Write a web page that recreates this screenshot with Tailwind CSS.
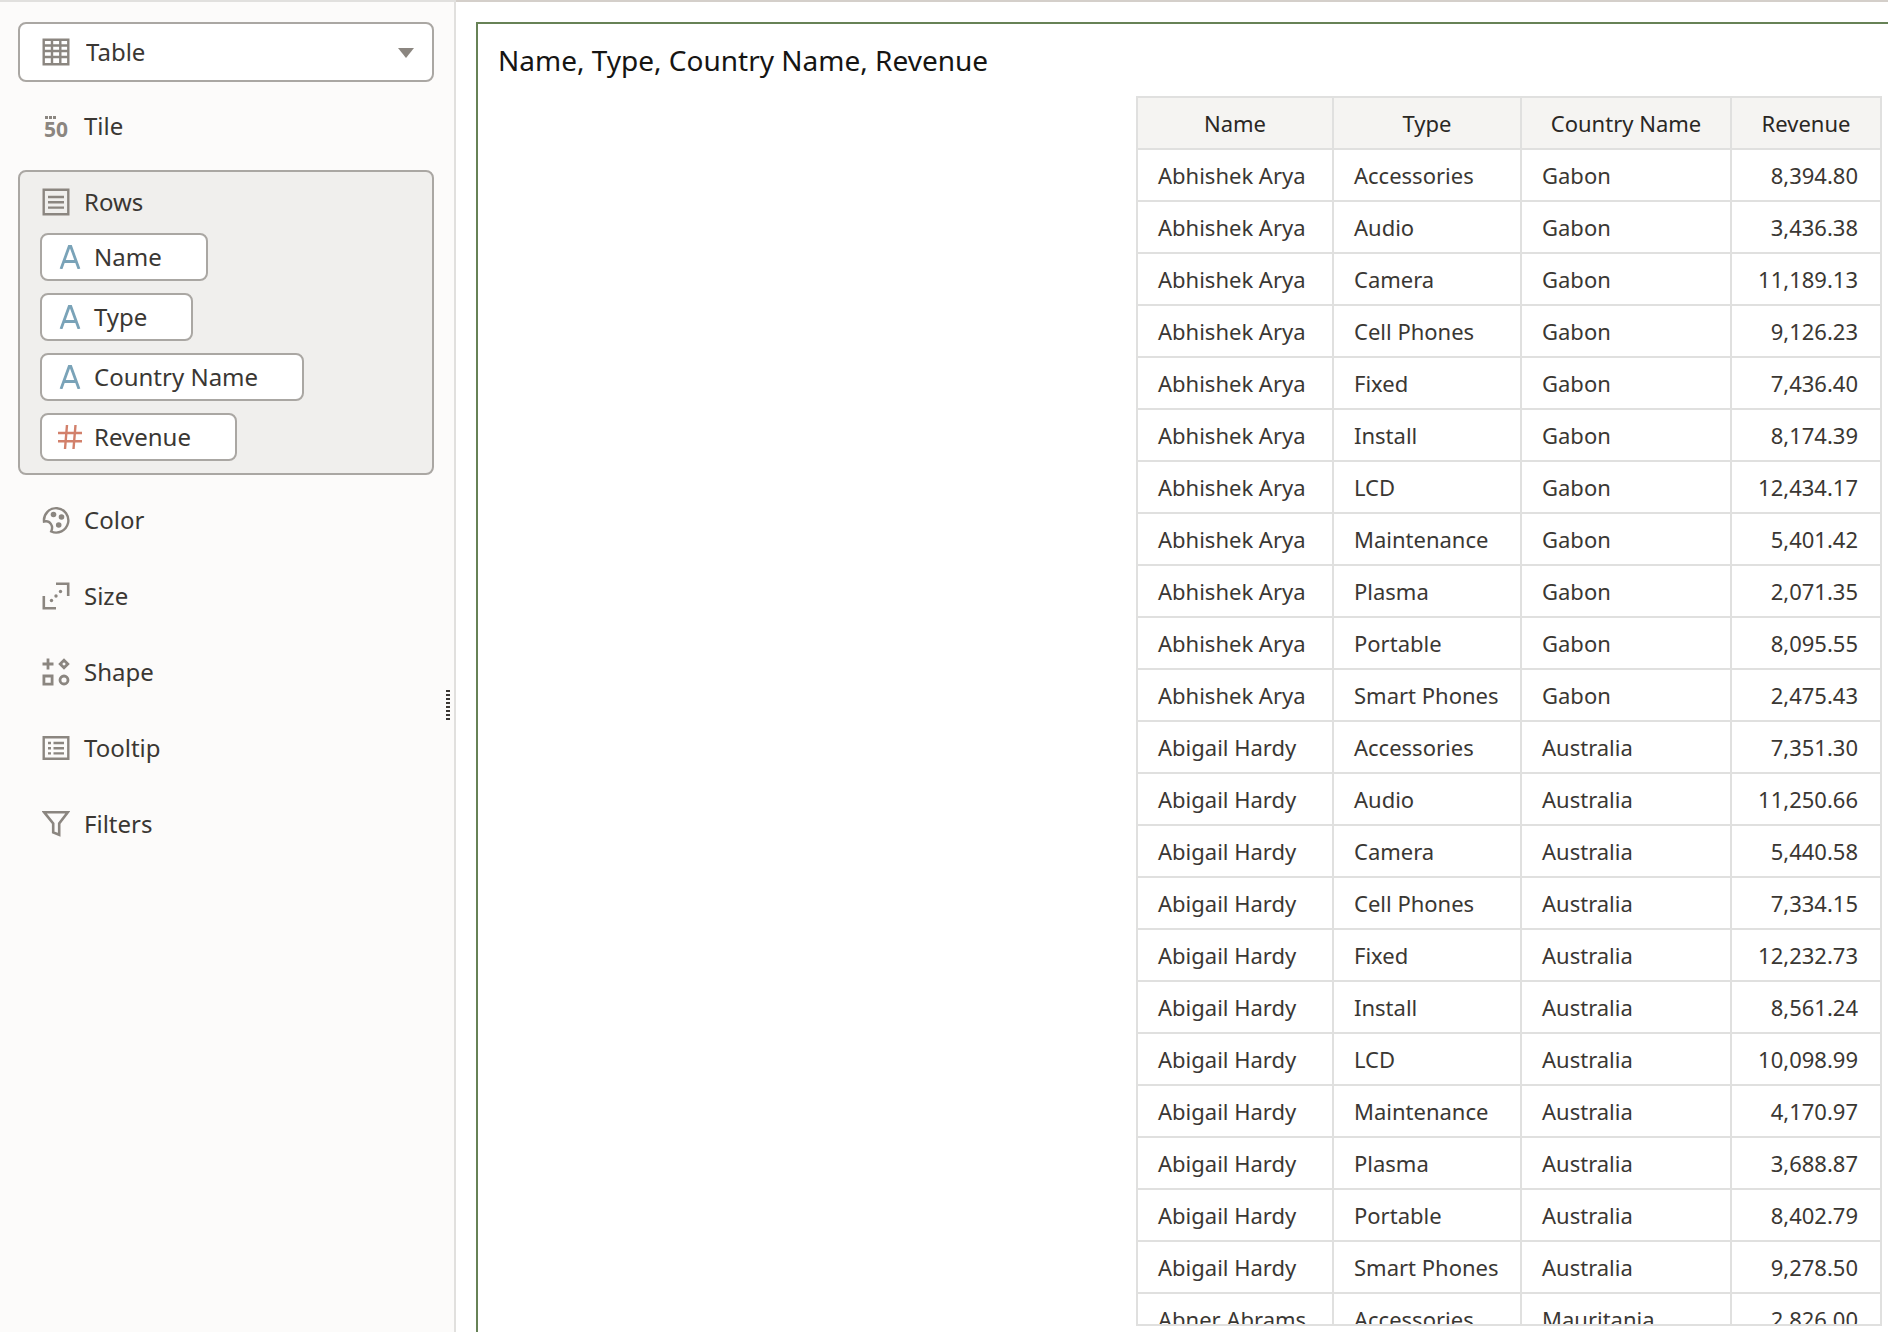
<!DOCTYPE html>
<html lang="en">
<head>
<meta charset="utf-8">
<meta name="viewport" content="width=device-width, initial-scale=1">
<title>Name, Type, Country Name, Revenue</title>
<script src="https://cdn.jsdelivr.net/npm/@tailwindcss/browser@4"></script>
</head>
<body class="flex h-screen overflow-hidden bg-white font-['Noto_Sans',sans-serif] text-[#3a3733]">

<!-- Grammar panel -->
<aside class="relative flex w-[456px] shrink-0 flex-col border-t-2 border-r-2 border-[#e1e0de] bg-[#fcfbfa] pt-5 pr-5 pl-[18px] text-2xl">
  <div class="relative">
    <select id="viz" aria-label="Visualization" class="h-[60px] w-full appearance-none rounded-lg border-2 border-[#aaa7a3] bg-white pl-[66px]">
      <option>Table</option>
    </select>
    <svg class="pointer-events-none absolute top-4 left-6 size-7" viewBox="0 0 28 28" fill="none" stroke="#8b8680" stroke-width="2.4" aria-hidden="true">
      <path d="M1.700 1.700h24.600v24.600H1.700zM10 2v24M18.300 2v24M2 7.500h24M2 13h24M2 19h24"/>
    </svg>
    <svg class="pointer-events-none absolute top-[26px] right-5 h-[10px] w-4" viewBox="0 0 16 10" fill="#8b8680" aria-hidden="true"><path d="M0 0h16L8 10z"/></svg>
  </div>

  <button type="button" class="mt-3 flex h-16 items-center gap-[14px] pl-6 text-left">
    <svg class="size-7 overflow-visible" viewBox="0 0 28 28" fill="#8b8680" aria-hidden="true">
      <path d="M3 4h3v3H3zM7 4h3v3H7zM11 4h3v3h-3z"/>
      <text x="2" y="25" font-size="21" font-weight="700">50</text>
    </svg>
    Tile
  </button>

  <section class="mt-3 rounded-lg border-2 border-[#aaa7a3] bg-[#f0efed] px-5 pb-3" aria-labelledby="rows">
    <h2 id="rows" class="flex h-[61px] items-center gap-[14px] pb-[2px] pl-[2px]">
      <svg class="size-7" viewBox="0 0 28 28" fill="none" stroke="#8b8680" stroke-width="2.400" aria-hidden="true"><path d="M1.700 1.700h24.600v24.600H1.700zM6 9h16M6 14.300h16M6 19.600h16"/></svg>
      Rows
    </h2>
    <div class="flex flex-col items-start gap-3">
      <button type="button" class="flex h-12 items-center gap-3 rounded-lg border-2 border-[#aaa7a3] bg-white pr-11 pl-4">
        <svg class="size-6" viewBox="0 0 24 24" fill="none" stroke="#7aa3b8" stroke-width="2.800" aria-hidden="true"><path d="M3 24 11.200 1.500h1.600L21 24M6 16.500h12"/></svg>Name</button>
      <button type="button" class="flex h-12 items-center gap-3 rounded-lg border-2 border-[#aaa7a3] bg-white pr-11 pl-4">
        <svg class="size-6" viewBox="0 0 24 24" fill="none" stroke="#7aa3b8" stroke-width="2.800" aria-hidden="true"><path d="M3 24 11.200 1.500h1.600L21 24M6 16.500h12"/></svg>Type</button>
      <button type="button" class="flex h-12 items-center gap-3 rounded-lg border-2 border-[#aaa7a3] bg-white pr-11 pl-4">
        <svg class="size-6" viewBox="0 0 24 24" fill="none" stroke="#7aa3b8" stroke-width="2.800" aria-hidden="true"><path d="M3 24 11.200 1.500h1.600L21 24M6 16.500h12"/></svg>Country Name</button>
      <button type="button" class="flex h-12 items-center gap-3 rounded-lg border-2 border-[#aaa7a3] bg-white pr-11 pl-4">
        <svg class="size-6" viewBox="0 0 24 24" fill="none" stroke="#d2806b" stroke-width="2.400" aria-hidden="true"><path d="M0 8h24M0 16.300h24M9 0 7 24M17.500 0l-2 24"/></svg>Revenue</button>
    </div>
  </section>

  <div class="mt-[13px] flex flex-col gap-3">
    <button type="button" class="flex h-16 items-center gap-[14px] pl-6 text-left">
      <svg class="size-7" viewBox="0 0 28 28" fill="none" stroke="#8b8680" stroke-width="2.400" aria-hidden="true">
        <path d="M2 15.500A12.200 12.200 0 1 1 9.200 25.500C11.800 20 8 13.800 2 15.500z"/>
        <g fill="#8b8680" stroke="none"><circle cx="11.500" cy="8.500" r="2.800"/><circle cx="19.500" cy="11" r="2.800"/><circle cx="16.700" cy="19" r="2.800"/></g>
      </svg>
      Color
    </button>
    <button type="button" class="flex h-16 items-center gap-[14px] pl-6 text-left">
      <svg class="size-7" viewBox="0 0 28 28" fill="none" stroke="#8b8680" stroke-width="2.600" aria-hidden="true">
        <path d="M14 1.800h12.200V14M1.800 14v12.200H14"/>
        <g fill="#8b8680" stroke="none"><circle cx="9.500" cy="18.500" r="1.700"/><circle cx="14" cy="14" r="1.700"/><circle cx="18.500" cy="9.500" r="1.700"/></g>
      </svg>
      Size
    </button>
    <button type="button" class="flex h-16 items-center gap-[14px] pl-6 text-left">
      <svg class="size-7" viewBox="0 0 28 28" fill="none" stroke="#8b8680" stroke-width="2.800" aria-hidden="true">
        <path d="M6 .500v11M.500 6h11M22 2.200 25.800 6 22 9.800 18.200 6zM1.900 18h8.200v8.200H1.900z"/><circle cx="22" cy="22" r="4"/>
      </svg>
      Shape
    </button>
    <button type="button" class="flex h-16 items-center gap-[14px] pl-6 text-left">
      <svg class="size-7" viewBox="0 0 28 28" fill="none" stroke="#8b8680" stroke-width="2.400" aria-hidden="true">
        <path d="M1.700 3.300h24.600v21.400H1.700zM6 9h3M11.500 9H22M6 14.200h3M11.500 14.200H22M6 19.400h3M11.500 19.400H22"/>
      </svg>
      Tooltip
    </button>
    <button type="button" class="flex h-16 items-center gap-[14px] pl-6 text-left">
      <svg class="size-7" viewBox="0 0 28 28" fill="none" stroke="#8b8680" stroke-width="2.600" aria-hidden="true">
        <path d="M2.200 2.300h23.600L17.200 13.500v11.300l-6-2.400v-8.900z"/>
      </svg>
      Filters
    </button>
  </div>

  <div role="separator" aria-orientation="vertical" class="absolute top-[688px] right-1 h-[30px] w-1 bg-[repeating-linear-gradient(#3a3733_0_2px,transparent_2px_4px)]"></div>
</aside>

<!-- Canvas -->
<main class="flex min-w-0 flex-1 flex-col border-t-2 border-[#d4cfca] pt-5 pl-5">
  <section class="flex min-h-0 flex-1 flex-col border-t-2 border-l-2 border-[#678256] pr-[6px] pb-[6px]">
    <h1 class="flex h-[72px] shrink-0 items-center pl-5 text-[28px] text-[#161513]">Name, Type, Country Name, Revenue</h1>
    <div class="ml-auto min-h-0 flex-1 overflow-hidden border-2 border-[#e0e0df]">
      <table class="w-[742px] table-fixed border-separate border-spacing-0 text-[22px] leading-[30px]">
        <thead>
          <tr class="h-[52px] bg-[#f5f4f2] text-[#2a2724]">
            <th class="w-[196px] border-r-2 border-b-2 border-[#e0e0df] font-normal">Name</th>
            <th class="w-[188px] border-r-2 border-b-2 border-[#e0e0df] font-normal">Type</th>
            <th class="w-[210px] border-r-2 border-b-2 border-[#e0e0df] font-normal">Country Name</th>
            <th class="border-b-2 border-[#e0e0df] font-normal">Revenue</th>
          </tr>
        </thead>
        <tbody id="data"></tbody>
      </table>
    </div>
  </section>
</main>

<script>
  const types = ['Accessories', 'Audio', 'Camera', 'Cell Phones', 'Fixed', 'Install', 'LCD', 'Maintenance', 'Plasma', 'Portable', 'Smart Phones'];
  const people = [
    ['Abhishek Arya', 'Gabon', ['8,394.80', '3,436.38', '11,189.13', '9,126.23', '7,436.40', '8,174.39', '12,434.17', '5,401.42', '2,071.35', '8,095.55', '2,475.43']],
    ['Abigail Hardy', 'Australia', ['7,351.30', '11,250.66', '5,440.58', '7,334.15', '12,232.73', '8,561.24', '10,098.99', '4,170.97', '3,688.87', '8,402.79', '9,278.50']],
    ['Abner Abrams', 'Mauritania', ['2,826.00']]
  ];
  document.getElementById('data').innerHTML = people.map(([name, country, values]) => values.map((value, i) => `
    <tr class="h-[52px]">
      <td class="border-r-2 border-b-2 border-[#e0e0df] pl-5">${name}</td>
      <td class="border-r-2 border-b-2 border-[#e0e0df] pl-5">${types[i]}</td>
      <td class="border-r-2 border-b-2 border-[#e0e0df] pl-5">${country}</td>
      <td class="border-b-2 border-[#e0e0df] pr-[22px] text-right">${value}</td>
    </tr>`).join('')).join('');
</script>
</body>
</html>
